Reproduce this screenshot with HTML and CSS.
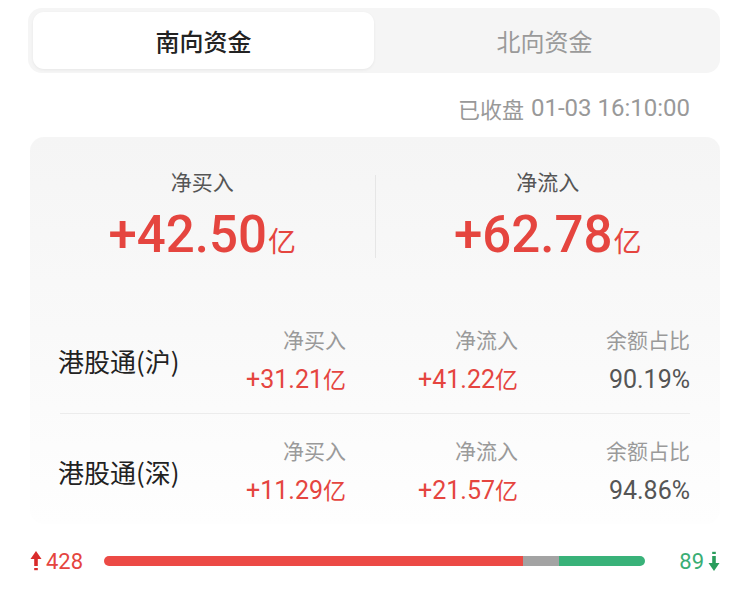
FILE: index.html
```html
<!DOCTYPE html>
<html lang="zh-CN">
<head>
<meta charset="utf-8">
<link rel="stylesheet" href="styles.css">
</head>
<body>
<div class="tabs">
  <div class="tab active">南向资金</div>
  <div class="tab">北向资金</div>
</div>
<div class="stamp">已收盘 <span class="num">01-03 16:10:00</span></div>
<div class="card">
  <div class="summary">
    <div class="sum-col">
      <div class="sum-label">净买入</div>
      <div class="sum-value"><span class="num">+42.50</span><span class="unit">亿</span></div>
    </div>
    <div class="vdiv"></div>
    <div class="sum-col">
      <div class="sum-label">净流入</div>
      <div class="sum-value"><span class="num">+62.78</span><span class="unit">亿</span></div>
    </div>
  </div>
  <div class="rows">
    <div class="row first">
      <div class="name">港股通(沪)</div>
      <div class="cell"><div class="lbl">净买入</div><div class="val red"><span class="num">+31.21</span>亿</div></div>
      <div class="cell"><div class="lbl">净流入</div><div class="val red"><span class="num">+41.22</span>亿</div></div>
      <div class="cell"><div class="lbl">余额占比</div><div class="val dark"><span class="num">90.19%</span></div></div>
    </div>
    <div class="row">
      <div class="name">港股通(深)</div>
      <div class="cell"><div class="lbl">净买入</div><div class="val red"><span class="num">+11.29</span>亿</div></div>
      <div class="cell"><div class="lbl">净流入</div><div class="val red"><span class="num">+21.57</span>亿</div></div>
      <div class="cell"><div class="lbl">余额占比</div><div class="val dark"><span class="num">94.86%</span></div></div>
    </div>
  </div>
</div>
<div class="barrow">
  <div class="side up">
    <svg class="arrow" viewBox="0 0 12 22" width="12" height="22"><path d="M6 1 L11.5 9 L7.8 9 L7.8 16 L4.2 16 L4.2 9 L0.5 9 Z" fill="#d92b2b"/><rect x="4.2" y="18" width="3.6" height="2.2" fill="#d92b2b"/></svg>
    <span class="num">428</span>
  </div>
  <div class="bar">
    <div class="seg red-seg" style="width:77.5%"></div>
    <div class="seg gray-seg" style="width:6.6%"></div>
    <div class="seg green-seg" style="width:15.9%"></div>
  </div>
  <div class="side down">
    <span class="num">89</span>
    <svg class="arrow" viewBox="0 0 12 22" width="12" height="22"><rect x="4.2" y="1.8" width="3.6" height="2.2" fill="#2a9d5c"/><path d="M6 21 L11.5 13 L7.8 13 L7.8 6 L4.2 6 L4.2 13 L0.5 13 Z" fill="#2a9d5c"/></svg>
  </div>
</div>
</body>
</html>
```
FILE: styles.css
```css
* { box-sizing: border-box; }
body {
  margin: 0;
  background: #fff;
  font-family: "Noto Sans CJK SC", "Noto Sans", sans-serif;
  color: #222;
}
.num { font-family: Roboto, "Noto Sans", sans-serif; }

.tabs {
  margin: 8px 30px 0 28px;
  height: 65px;
  padding: 4px 5px;
  background: #f5f5f5;
  border-radius: 14px;
  display: flex;
}
.tab {
  flex: 1;
  display: flex;
  align-items: center;
  justify-content: center;
  font-size: 24px;
  color: #9a9a9a;
  border-radius: 11px;
}
.tab.active {
  background: #fff;
  color: #222;
  font-weight: 500;
  box-shadow: 0 1px 3px rgba(0,0,0,0.06);
}

.stamp {
  height: 64px;
  padding-top: 6px;
  display: flex;
  align-items: center;
  justify-content: flex-end;
  padding-right: 60px;
  font-size: 22px;
  color: #999;
  gap: 7px;
}
.stamp .num { font-size: 24px; }

.card {
  margin: 0 30px;
  border-radius: 14px;
  background: linear-gradient(#f5f5f5 0%, #f9f9f9 50%, #fefefe 100%);
}

.summary {
  display: flex;
  padding-top: 30px;
  margin-bottom: 40px;
}
.sum-col {
  flex: 1;
  display: flex;
  flex-direction: column;
  align-items: center;
}
.sum-label {
  font-size: 21px;
  line-height: 28px;
  color: #555;
}
.sum-value {
  margin-top: 12px;
  height: 56px;
  display: flex;
  align-items: baseline;
  color: #e5453f;
}
.sum-value .num {
  font-size: 51px;
  line-height: 56px;
  font-weight: 500;
}
.sum-value .unit {
  font-size: 28px;
  margin-left: 1px;
}
.vdiv {
  width: 1px;
  height: 83px;
  margin-top: 8px;
  background: #e6e6e6;
}

.rows {
  padding: 0 30px;
}
.row {
  display: grid;
  grid-template-columns: minmax(0, 1fr) 172px 172px 172px;
  padding: 22px 0 18px;
  align-items: center;
}
.row.first { border-bottom: 1px solid #ececec; }
.name {
  font-size: 26px;
  color: #222;
  white-space: nowrap;
  margin-left: -2px;
}
.cell {
  display: flex;
  flex-direction: column;
  align-items: flex-end;
}
.lbl {
  font-size: 21px;
  line-height: 28px;
  color: #9a9a9a;
}
.val {
  margin-top: 10px;
  font-size: 23px;
  line-height: 30px;
}
.val .num { font-size: 25px; }
.red { color: #e5453f; }
.dark { color: #555; }

.barrow {
  margin-top: 22px;
  height: 30px;
  padding: 0 30px;
  display: flex;
  align-items: center;
}
.side {
  display: flex;
  align-items: center;
  gap: 4px;
  font-size: 22px;
}
.side.up { width: 74px; color: #e5453f; }
.side.down { width: 75px; justify-content: flex-end; color: #3aae74; }
.bar {
  flex: 1;
  height: 10px;
  border-radius: 5px;
  overflow: hidden;
  display: flex;
}
.seg { height: 100%; }
.red-seg { background: #ec4a45; }
.gray-seg { background: #a3a3a3; }
.green-seg { background: #39b279; }
```
